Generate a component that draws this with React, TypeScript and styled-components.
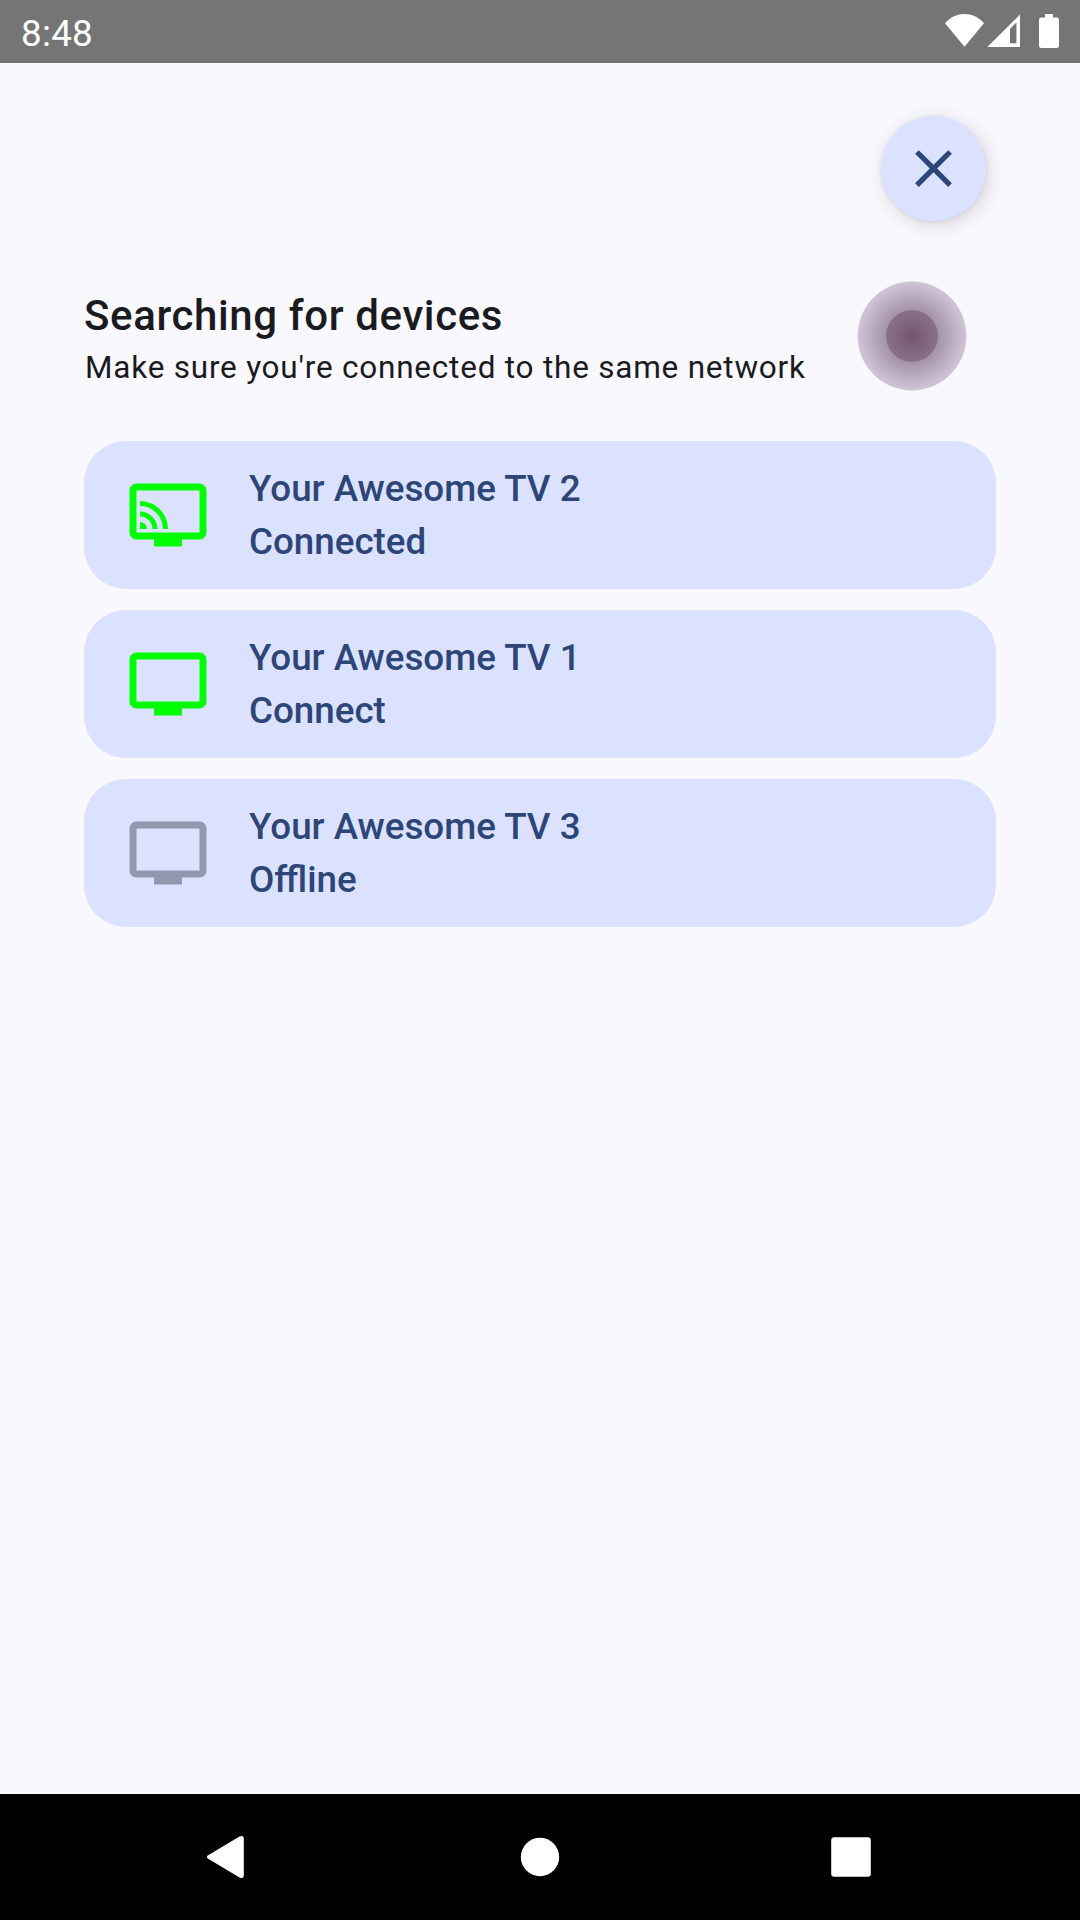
import React from 'react';
import styled, { createGlobalStyle } from 'styled-components';

const GlobalStyle = createGlobalStyle`
  *, *::before, *::after { box-sizing: border-box; }
  body { margin: 0; }
`;

const Screen = styled.div`
  display: flex;
  flex-direction: column;
  width: 1080px;
  height: 1920px;
  background: #faf8ff;
  color: #1a1b21;
  font-family: Roboto, 'Liberation Sans', sans-serif;
`;

const StatusBar = styled.header`
  display: flex;
  flex: none;
  align-items: center;
  justify-content: space-between;
  height: 63px;
  padding: 3px 20px 0 21px;
  background: #757575;
  color: #fff;
`;

const Clock = styled.time`
  font-size: 36.75px;
  line-height: 43px;
  letter-spacing: 0.3px;
`;

const StatusIcons = styled.svg`
  display: block;
  width: 116px;
  height: 36px;
  margin-bottom: 4px;
`;

const Content = styled.main`
  display: flex;
  flex: 1;
  flex-direction: column;
  padding: 53px 84px 0;
`;

const CloseButton = styled.button`
  display: flex;
  flex: none;
  align-items: center;
  justify-content: center;
  align-self: flex-end;
  width: 105px;
  height: 105px;
  margin-right: 10px;
  padding: 0;
  border: 0;
  border-radius: 50%;
  background: #dae2ff;
  color: #2e4578;
  box-shadow: 3px 4px 18px rgba(40, 30, 30, 0.17), 0 1px 4px rgba(40, 30, 30, 0.07);

  svg {
    width: 63px;
    height: 63px;
  }
`;

const SearchHeader = styled.section`
  display: flex;
  align-items: center;
  justify-content: space-between;
  height: 110px;
  margin-top: 60px;
  padding-right: 29px;
`;

const Heading = styled.div`
  display: flex;
  flex-direction: column;
  padding-top: 1px;
`;

const Title = styled.h1`
  margin: 0;
  font-size: 42px;
  font-weight: 500;
  line-height: 63px;
  letter-spacing: 0.62px;
`;

const Subtitle = styled.p`
  margin: 0;
  padding-left: 1px;
  font-size: 31.5px;
  line-height: 42px;
  letter-spacing: 0.78px;
  white-space: nowrap;
`;

const Pulse = styled.svg`
  display: block;
  width: 110px;
  height: 110px;
`;

const DeviceList = styled.ul`
  display: flex;
  flex-direction: column;
  gap: 21px;
  margin: 50px 0 0;
  padding: 0;
  list-style: none;
`;

const DeviceCard = styled.li`
  display: flex;
  align-items: center;
  gap: 39px;
  height: 148px;
  padding: 0 42px;
  border-radius: 42px;
  background: #dae2ff;
  color: #2e4578;
`;

const DeviceIcon = styled.svg<{ $online: boolean }>`
  flex: none;
  width: 84px;
  height: 84px;
  fill: ${(p) => (p.$online ? '#00ff00' : '#9398ae')};
`;

const DeviceText = styled.div`
  display: flex;
  flex-direction: column;
  font-size: 36.75px;
  font-weight: 500;
  line-height: 53px;
`;

const NavBar = styled.nav`
  display: flex;
  flex: none;
  align-items: center;
  justify-content: center;
  gap: 228px;
  height: 126px;
  background: #000;
`;

const NavIcon = styled.svg`
  width: 84px;
  height: 84px;
  fill: #fff;
`;

type Device = { name: string; status: string; online: boolean; casting?: boolean };

const devices: Device[] = [
  { name: 'Your Awesome TV 2', status: 'Connected', online: true, casting: true },
  { name: 'Your Awesome TV 1', status: 'Connect', online: true },
  { name: 'Your Awesome TV 3', status: 'Offline', online: false },
];

const TvIcon = ({ online, casting }: { online: boolean; casting?: boolean }) => (
  <DeviceIcon viewBox="0 0 24 24" $online={online}>
    <path d="M21 3H3c-1.1 0-2 .9-2 2v12c0 1.1.9 2 2 2h5v2h8v-2h5c1.1 0 1.99-.9 1.99-2L23 5c0-1.1-.9-2-2-2zm0 14H3V5h18v12z" />
    {casting && (
      <path d="M4 14v2h2c0-1.11-.89-2-2-2zM4 11v1.43c1.97 0 3.57 1.6 3.57 3.57H9c0-2.76-2.24-5-5-5zM4 8v1.45c3.61 0 6.55 2.93 6.55 6.55H12c0-4.42-3.59-8-8-8z" />
    )}
  </DeviceIcon>
);

const SearchPulse = () => (
  <Pulse viewBox="0 0 110 110">
    <defs>
      <radialGradient id="pulse-halo">
        <stop offset="0" stopColor="#8c7590" />
        <stop offset="0.48" stopColor="#a492a9" />
        <stop offset="1" stopColor="#d0c5d7" />
      </radialGradient>
      <radialGradient id="pulse-core">
        <stop offset="0" stopColor="#74546f" />
        <stop offset="1" stopColor="#8a718b" />
      </radialGradient>
    </defs>
    <circle cx="55" cy="55" r="54.4" fill="url(#pulse-halo)" />
    <circle cx="55" cy="55" r="26" fill="url(#pulse-core)" />
  </Pulse>
);

export default function App() {
  return (
    <Screen>
      <GlobalStyle />
      <StatusBar>
        <Clock>8:48</Clock>
        <StatusIcons viewBox="944 13 116 36" fill="#fff">
          <path d="M945 23.3C956 11 973 11 984 23.3L964.5 46.8z" />
          <path fillRule="evenodd" d="M1020 14.5V47H987.3zM1016.4 22.6L1010 29V43.3H1016.4z" />
          <path d="M1045 14h8v3.5h3.8q2.2 0 2.2 2.2v26q0 2.2-2.2 2.2h-15.6q-2.2 0-2.2-2.2v-26q0-2.2 2.2-2.2h3.8z" />
        </StatusIcons>
      </StatusBar>
      <Content>
        <CloseButton aria-label="Close">
          <svg viewBox="0 0 24 24" fill="currentColor">
            <path d="M19 6.41L17.59 5 12 10.59 6.41 5 5 6.41 10.59 12 5 17.59 6.41 19 12 13.41 17.59 19 19 17.59 13.41 12z" />
          </svg>
        </CloseButton>
        <SearchHeader>
          <Heading>
            <Title>Searching for devices</Title>
            <Subtitle>Make sure you're connected to the same network</Subtitle>
          </Heading>
          <SearchPulse />
        </SearchHeader>
        <DeviceList>
          {devices.map((d) => (
            <DeviceCard key={d.name}>
              <TvIcon online={d.online} casting={d.casting} />
              <DeviceText>
                <span>{d.name}</span>
                <span>{d.status}</span>
              </DeviceText>
            </DeviceCard>
          ))}
        </DeviceList>
      </Content>
      <NavBar>
        <NavIcon viewBox="0 0 84 84">
          <path d="M22.2 40.2L53.5 21.6Q57.8 19.8 57.8 24V60Q57.8 64.2 53.5 62.4L22.2 43.8Q19.6 42 22.2 40.2z" />
        </NavIcon>
        <NavIcon viewBox="0 0 84 84">
          <circle cx="42" cy="42" r="19.2" />
        </NavIcon>
        <NavIcon viewBox="0 0 84 84">
          <rect x="21.2" y="22.2" width="39.6" height="39.6" rx="3" />
        </NavIcon>
      </NavBar>
    </Screen>
  );
}
